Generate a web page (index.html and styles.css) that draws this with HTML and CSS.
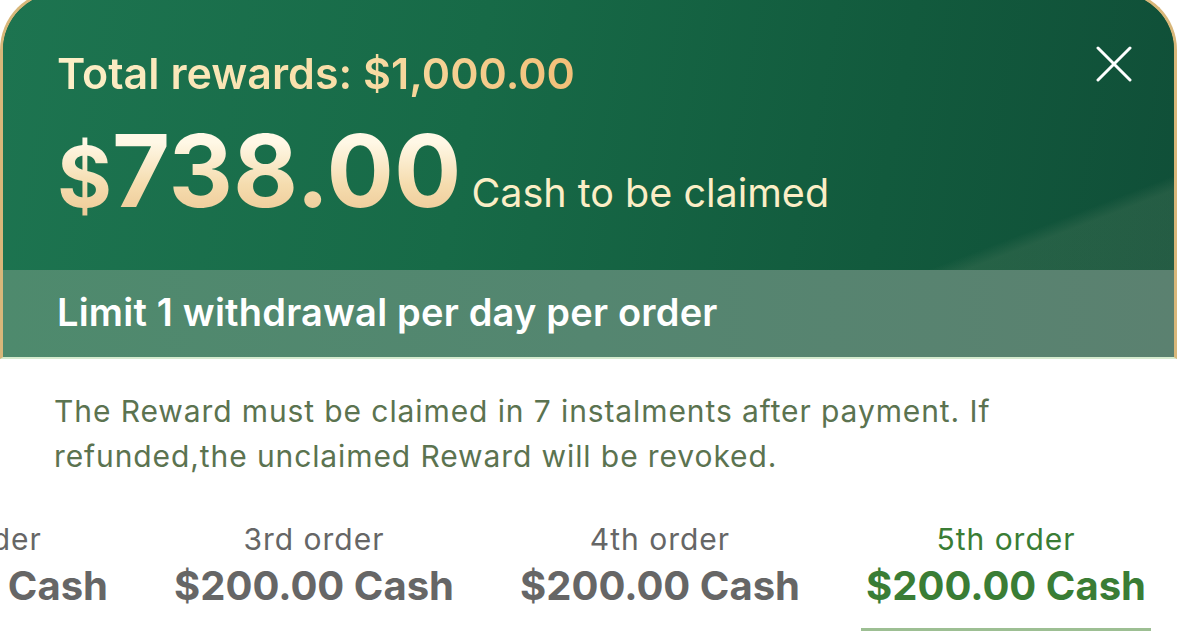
FILE: index.html
```html
<!DOCTYPE html>
<html lang="en">
<head>
    <meta charset="UTF-8">
    <meta name="viewport" content="width=device-width, initial-scale=1.0">
    <title>Cash Rewards</title>
    <link rel="stylesheet" href="styles.css">
</head>
<body>
    <div class="sheet">
        <div class="header">
            <div class="hero">
                <div class="header-top">
                    <div class="total">Total rewards: $1,000.00</div>
                    <button class="close" aria-label="Close">
                        <svg width="36" height="36" viewBox="0 0 36 36">
                            <path d="M2 2 L34 34 M34 2 L2 34" stroke="#fff" stroke-width="3" stroke-linecap="round" fill="none"/>
                        </svg>
                    </button>
                </div>
                <div class="amount-row">
                    <span class="amount"><span class="currency">$</span>738.00</span>
                    <span class="amount-note">Cash to be claimed</span>
                </div>
            </div>
            <div class="limit">Limit 1 withdrawal per day per order</div>
        </div>

        <div class="content">
            <p class="notice">The Reward must be claimed in 7 instalments after payment. If refunded,the unclaimed Reward will be revoked.</p>

            <div class="tabs">
                <div class="tab">
                    <div class="tab-label">2nd order</div>
                    <div class="tab-value">$200.00 Cash</div>
                </div>
                <div class="tab">
                    <div class="tab-label">3rd order</div>
                    <div class="tab-value">$200.00 Cash</div>
                </div>
                <div class="tab">
                    <div class="tab-label">4th order</div>
                    <div class="tab-value">$200.00 Cash</div>
                </div>
                <div class="tab active">
                    <div class="tab-label">5th order</div>
                    <div class="tab-value">$200.00 Cash</div>
                </div>
            </div>
        </div>
    </div>
</body>
</html>
```

FILE: styles.css
```css
body {
    margin: 0;
    background: #1b1b1b;
    font-family: Inter, Roboto, "Liberation Sans", Arial, sans-serif;
    overflow: hidden;
}
.sheet {
    margin-top: -10px;
    width: 1179px;
    height: 660px;
    background: white;
    overflow: hidden;
}
.header {
    border: 3px solid #d8b77a;
    border-bottom: 2px solid #d6ebcf;
    border-radius: 60px 60px 0 0;
    margin-right: 2px;
    overflow: hidden;
    background: #135c3f;
}
.hero {
    height: 277px;
    background:
        linear-gradient(159deg, rgba(0,0,0,0) 87%, rgba(110,140,110,0.22) 89%),
        linear-gradient(100deg, #1d7450 0%, #176a47 40%, #125a3d 75%, #104f38 100%);
}
.header-top {
    display: flex;
    justify-content: space-between;
    align-items: flex-start;
    padding: 55px 42px 0 54px;
}
.total {
    font-size: 43px;
    line-height: 50px;
    font-weight: 600;
    background: linear-gradient(90deg, #fcefc8 0%, #f8dca4 60%, #f2bf78 100%);
    -webkit-background-clip: text;
    background-clip: text;
    color: transparent;
}
.close {
    background: none;
    border: none;
    padding: 0;
    margin-top: -2px;
    width: 36px;
    height: 36px;
    cursor: pointer;
}
.amount-row {
    display: flex;
    align-items: baseline;
    gap: 10px;
    padding: 23px 0 0 54px;
}
.amount {
    font-size: 100px;
    line-height: 100px;
    font-weight: 700;
    background: linear-gradient(180deg, #fff8e6 20%, #f5dcae 60%, #ebc490 100%);
    -webkit-background-clip: text;
    background-clip: text;
    color: transparent;
}
.currency {
    font-size: 84px;
}
.amount-note {
    font-size: 39.5px;
    color: #fbeec6;
}
.limit {
    height: 87px;
    line-height: 84px;
    padding-left: 54px;
    font-size: 38px;
    font-weight: 600;
    letter-spacing: 0.2px;
    color: #fff;
    background: linear-gradient(90deg, #4e8a6d 0%, #548670 50%, #5b8170 100%);
}
.content {
    padding: 0 54px;
}
.notice {
    margin: 30px 0 0;
    font-size: 30px;
    line-height: 45px;
    letter-spacing: 0.9px;
    color: #5b7350;
}
.tabs {
    display: flex;
    margin: 42px 0 0 -259px;
}
.tab {
    flex: 0 0 346px;
    text-align: center;
    padding-bottom: 22px;
    position: relative;
}
.tab-label {
    font-size: 30px;
    line-height: 36px;
    letter-spacing: 1px;
    color: #666;
}
.tab-value {
    margin-top: 6px;
    font-size: 40px;
    line-height: 46px;
    font-weight: 700;
    color: #666;
}
.tab.active .tab-label,
.tab.active .tab-value {
    color: #3a7d35;
}
.tab.active::after {
    content: "";
    position: absolute;
    left: 28px;
    right: 28px;
    bottom: 0;
    height: 3px;
    background: #9dbf93;
}
```
